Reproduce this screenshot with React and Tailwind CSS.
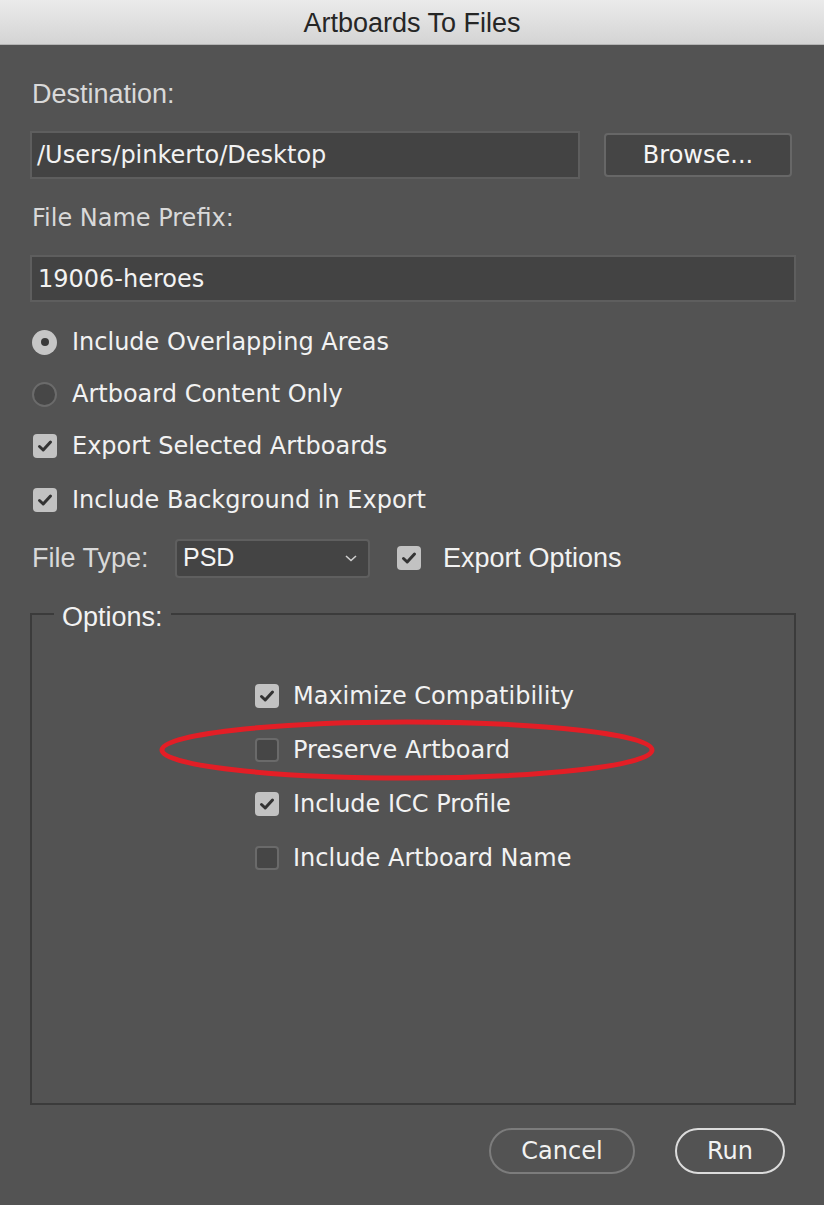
import React from "react";

const body = { fontFamily: '"DejaVu Sans", Verdana, sans-serif' };
const label = { fontFamily: '"Liberation Sans", Arial, sans-serif' };

function Check({ checked }) {
  if (!checked) {
    return (
      <span className="w-[24px] h-[24px] rounded-[4px] bg-[#464646] border-2 border-[#6a6a6a] shrink-0 box-border" />
    );
  }
  return (
    <span className="w-[24px] h-[24px] rounded-[4px] bg-[#c2c2c2] shrink-0 flex items-center justify-center">
      <svg width="18" height="18" viewBox="0 0 18 18">
        <path d="M3.5 9.5 L7.2 13 L14.5 5" fill="none" stroke="#333333" strokeWidth="3" strokeLinecap="round" strokeLinejoin="round" />
      </svg>
    </span>
  );
}

function Radio({ checked }) {
  if (checked) {
    return (
      <span className="w-[25px] h-[25px] rounded-full bg-[#c6c6c6] shrink-0 flex items-center justify-center">
        <span className="w-[8px] h-[8px] rounded-full bg-[#3a3a3a]" />
      </span>
    );
  }
  return <span className="w-[25px] h-[25px] rounded-full bg-[#474747] border-2 border-[#6b6b6b] shrink-0 box-border" />;
}

export default function App() {
  return (
    <div className="w-[824px] h-[1205px] bg-[#535353] flex flex-col overflow-hidden">
      <div className="h-[45px] shrink-0 bg-gradient-to-b from-[#ebebeb] to-[#d4d4d4] border-b border-[#b4b4b4] flex items-center justify-center pt-[3px]">
        <span className="text-[27px] text-[#262626] leading-none" style={label}>Artboards To Files</span>
      </div>

      <div className="flex flex-col px-[30px]">
        <div className="h-[30px] mt-[34px] leading-[30px] text-[27px] text-[#d9d9d9] pl-[2px]" style={label}>Destination:</div>

        <div className="flex items-center mt-[22px] h-[48px]">
          <div className="w-[550px] h-[48px] bg-[#434343] border-2 border-[#5e5e5e] flex items-center pl-[5px] text-[24px] text-[#f2f2f2]" style={body}>
            /Users/pinkerto/Desktop
          </div>
          <div className="ml-[24px] w-[188px] h-[44px] rounded-[4px] bg-[#454545] border-2 border-[#676767] flex items-center justify-center text-[24px] font-medium text-[#f6f6f6]" style={body}>
            Browse...
          </div>
        </div>

        <div className="h-[30px] mt-[24px] leading-[30px] text-[24px] text-[#d9d9d9] pl-[2px]" style={body}>File Name Prefix:</div>

        <div className="mt-[22px] w-[766px] h-[47px] bg-[#434343] border-2 border-[#5e5e5e] flex items-center pl-[6px] text-[24px] text-[#f2f2f2]" style={body}>
          19006-heroes
        </div>

        <div className="flex flex-col mt-[14px] pl-[2px] text-[24px] text-[#f2f2f2]" style={body}>
          <div className="flex items-center gap-[15px] h-[52px]"><Radio checked /><span>Include Overlapping Areas</span></div>
          <div className="flex items-center gap-[15px] h-[52px]"><Radio /><span>Artboard Content Only</span></div>
          <div className="flex items-center gap-[15px] h-[52px] pl-[1px]"><Check checked /><span>Export Selected Artboards</span></div>
          <div className="flex items-center gap-[15px] h-[52px] pl-[1px] mt-[2px]"><Check checked /><span>Include Background in Export</span></div>
        </div>

        <div className="flex items-center h-[40px] mt-[12px]">
          <span className="text-[27px] text-[#d9d9d9] pl-[2px] w-[145px]" style={label}>File Type:</span>
          <div className="w-[195px] h-[39px] rounded-[4px] bg-[#444444] border-2 border-[#5f5f5f] flex items-center justify-between pl-[6px] pr-[10px]">
            <span className="text-[25px] text-[#f4f4f4]" style={label}>PSD</span>
            <svg width="14" height="10" viewBox="0 0 14 10">
              <path d="M2 3 L7 7.5 L12 3" fill="none" stroke="#cfcfcf" strokeWidth="1.6" />
            </svg>
          </div>
          <span className="ml-[27px]"><Check checked /></span>
          <span className="ml-[22px] text-[27px] text-[#f2f2f2]" style={label}>Export Options</span>
        </div>

        <div className="relative mt-[35px] w-[766px] h-[492px] border-2 border-[#3b3b3b] flex flex-col">
          <span className="absolute left-[22px] -top-[18px] px-[8px] bg-[#535353] text-[27px] leading-[40px] text-[#f2f2f2]" style={label}>Options:</span>
          <div className="flex flex-col mt-[54px] ml-[223px] text-[24px] text-[#f2f2f2]" style={body}>
            <div className="flex items-center gap-[14px] h-[54px]"><Check checked /><span>Maximize Compatibility</span></div>
            <div className="flex items-center gap-[14px] h-[54px]"><Check /><span>Preserve Artboard</span></div>
            <div className="flex items-center gap-[14px] h-[54px]"><Check checked /><span>Include ICC Profile</span></div>
            <div className="flex items-center gap-[14px] h-[54px]"><Check /><span>Include Artboard Name</span></div>
          </div>
          <svg className="absolute left-[126px] top-[104px]" width="498" height="62" viewBox="0 0 498 62">
            <ellipse cx="249" cy="31" rx="245" ry="28" fill="none" stroke="#e31e26" strokeWidth="5" />
          </svg>
        </div>

        <div className="flex justify-end items-center mt-[23px] mr-[9px] gap-[40px]">
          <div className="w-[146px] h-[46px] rounded-full border-2 border-[#7c7c7c] flex items-center justify-center text-[24px] text-[#f2f2f2]" style={body}>Cancel</div>
          <div className="w-[110px] h-[46px] rounded-full border-2 border-[#dcdcdc] flex items-center justify-center text-[24px] text-[#f2f2f2]" style={body}>Run</div>
        </div>
      </div>
    </div>
  );
}
